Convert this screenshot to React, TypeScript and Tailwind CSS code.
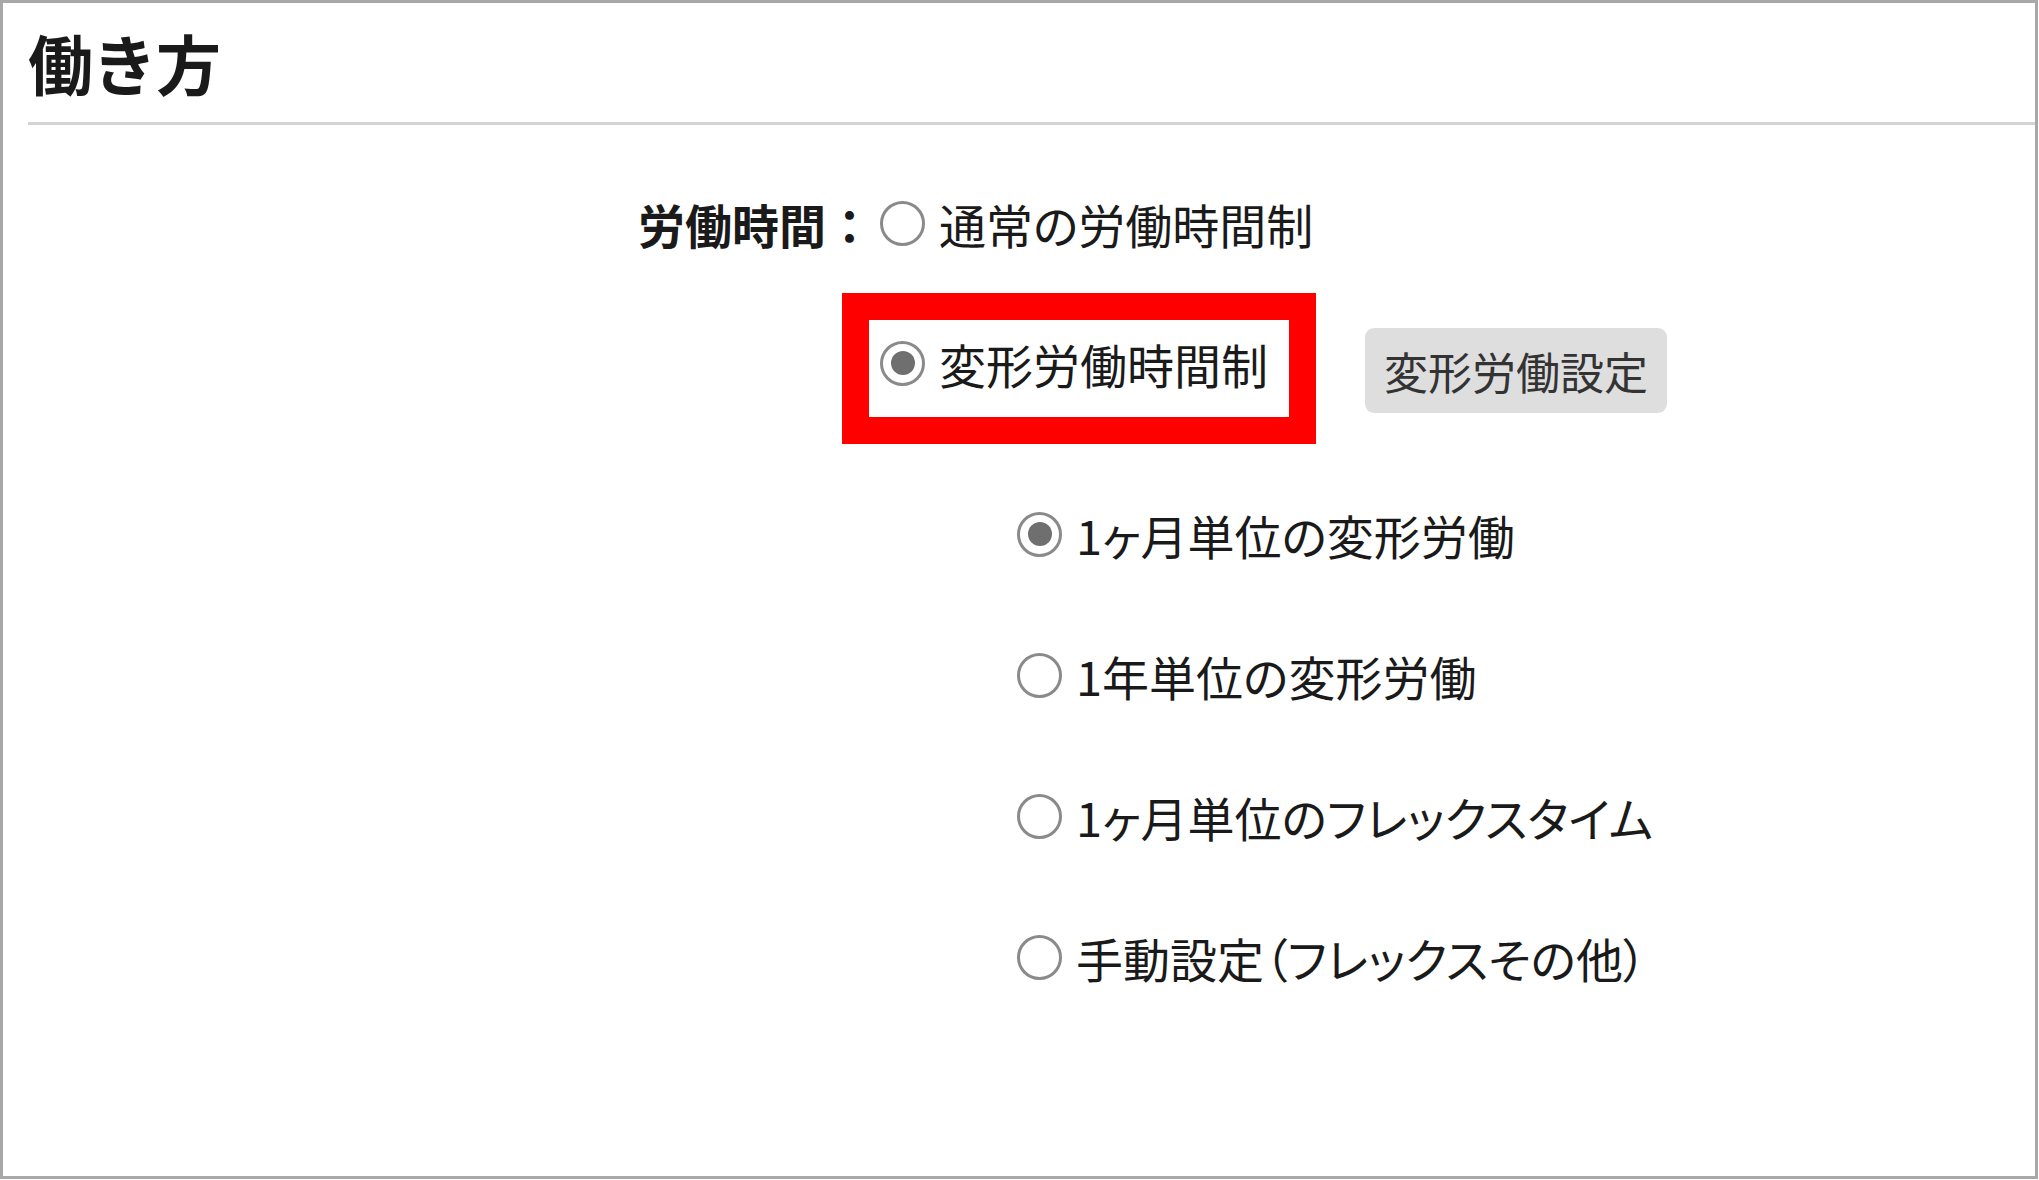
const jp = "font-['Meiryo','Noto_Sans_CJK_JP',sans-serif]";

type Opt = { label: string; checked?: boolean };

const subOptions: Opt[] = [
  { label: "1ヶ月単位の変形労働", checked: true },
  { label: "1年単位の変形労働" },
  { label: "1ヶ月単位のフレックスタイム" },
  { label: "手動設定（フレックスその他）" },
];

function Radio({ checked }: { checked?: boolean }) {
  return (
    <span className="w-[45px] h-[45px] shrink-0 rounded-full border-[3px] border-[#8a8a8a] bg-white flex items-center justify-center">
      {checked && <span className="w-[24px] h-[24px] rounded-full bg-[#6f6f6f]"></span>}
    </span>
  );
}

function RadioRow({ label, checked }: Opt) {
  return (
    <div className="h-[60px] flex items-center">
      <Radio checked={checked} />
      <span className="ml-[14px] whitespace-nowrap [font-feature-settings:'palt']">{label}</span>
    </div>
  );
}

export default function App() {
  return (
    <div className={`w-[2039px] h-[1180px] bg-white text-[#1a1a1a] ${jp}`}>
      <div className="w-[2038px] h-[1179px] border-[3px] border-[#a8a8a8] flex flex-col">

        {/* section title */}
        <div className="pl-[25px] pt-[27px]">
          <h1 className="text-[65px] leading-none font-bold tracking-[-1px]">働き方</h1>
          <div className="mt-[27px] h-[3px] bg-[#d4d4d4]"></div>
        </div>

        {/* working hours */}
        <div className="flex mt-[68px] text-[47px] leading-none">
          <div className="w-[870px] shrink-0 h-[60px] flex items-center justify-end font-bold">
            労働時間：
          </div>

          <div className="ml-[7px] flex flex-col">
            <RadioRow label="通常の労働時間制" />

            <div className="mt-[67px] h-[86px] flex items-center">
              <div className="relative w-[436px] h-[46px] flex items-center">
                <Radio checked />
                <span className="ml-[14px] whitespace-nowrap">変形労働時間制</span>
                {/* highlight frame */}
                <div className="absolute left-[-38px] top-[-47px] w-[474px] h-[151px] border-[27px] border-[#ff0000] pointer-events-none"></div>
              </div>
              <button className="ml-[49px] mt-[15px] w-[302px] h-[85px] rounded-[9px] bg-[#dedede] text-[44px] text-[#333] flex items-center justify-center">
                変形労働設定
              </button>
            </div>

            <div className="mt-[98px] pl-[137px] flex flex-col gap-[81px]">
              {subOptions.map((o, i) => (
                <RadioRow key={i} label={o.label} checked={o.checked} />
              ))}
            </div>
          </div>
        </div>

      </div>
    </div>
  );
}
